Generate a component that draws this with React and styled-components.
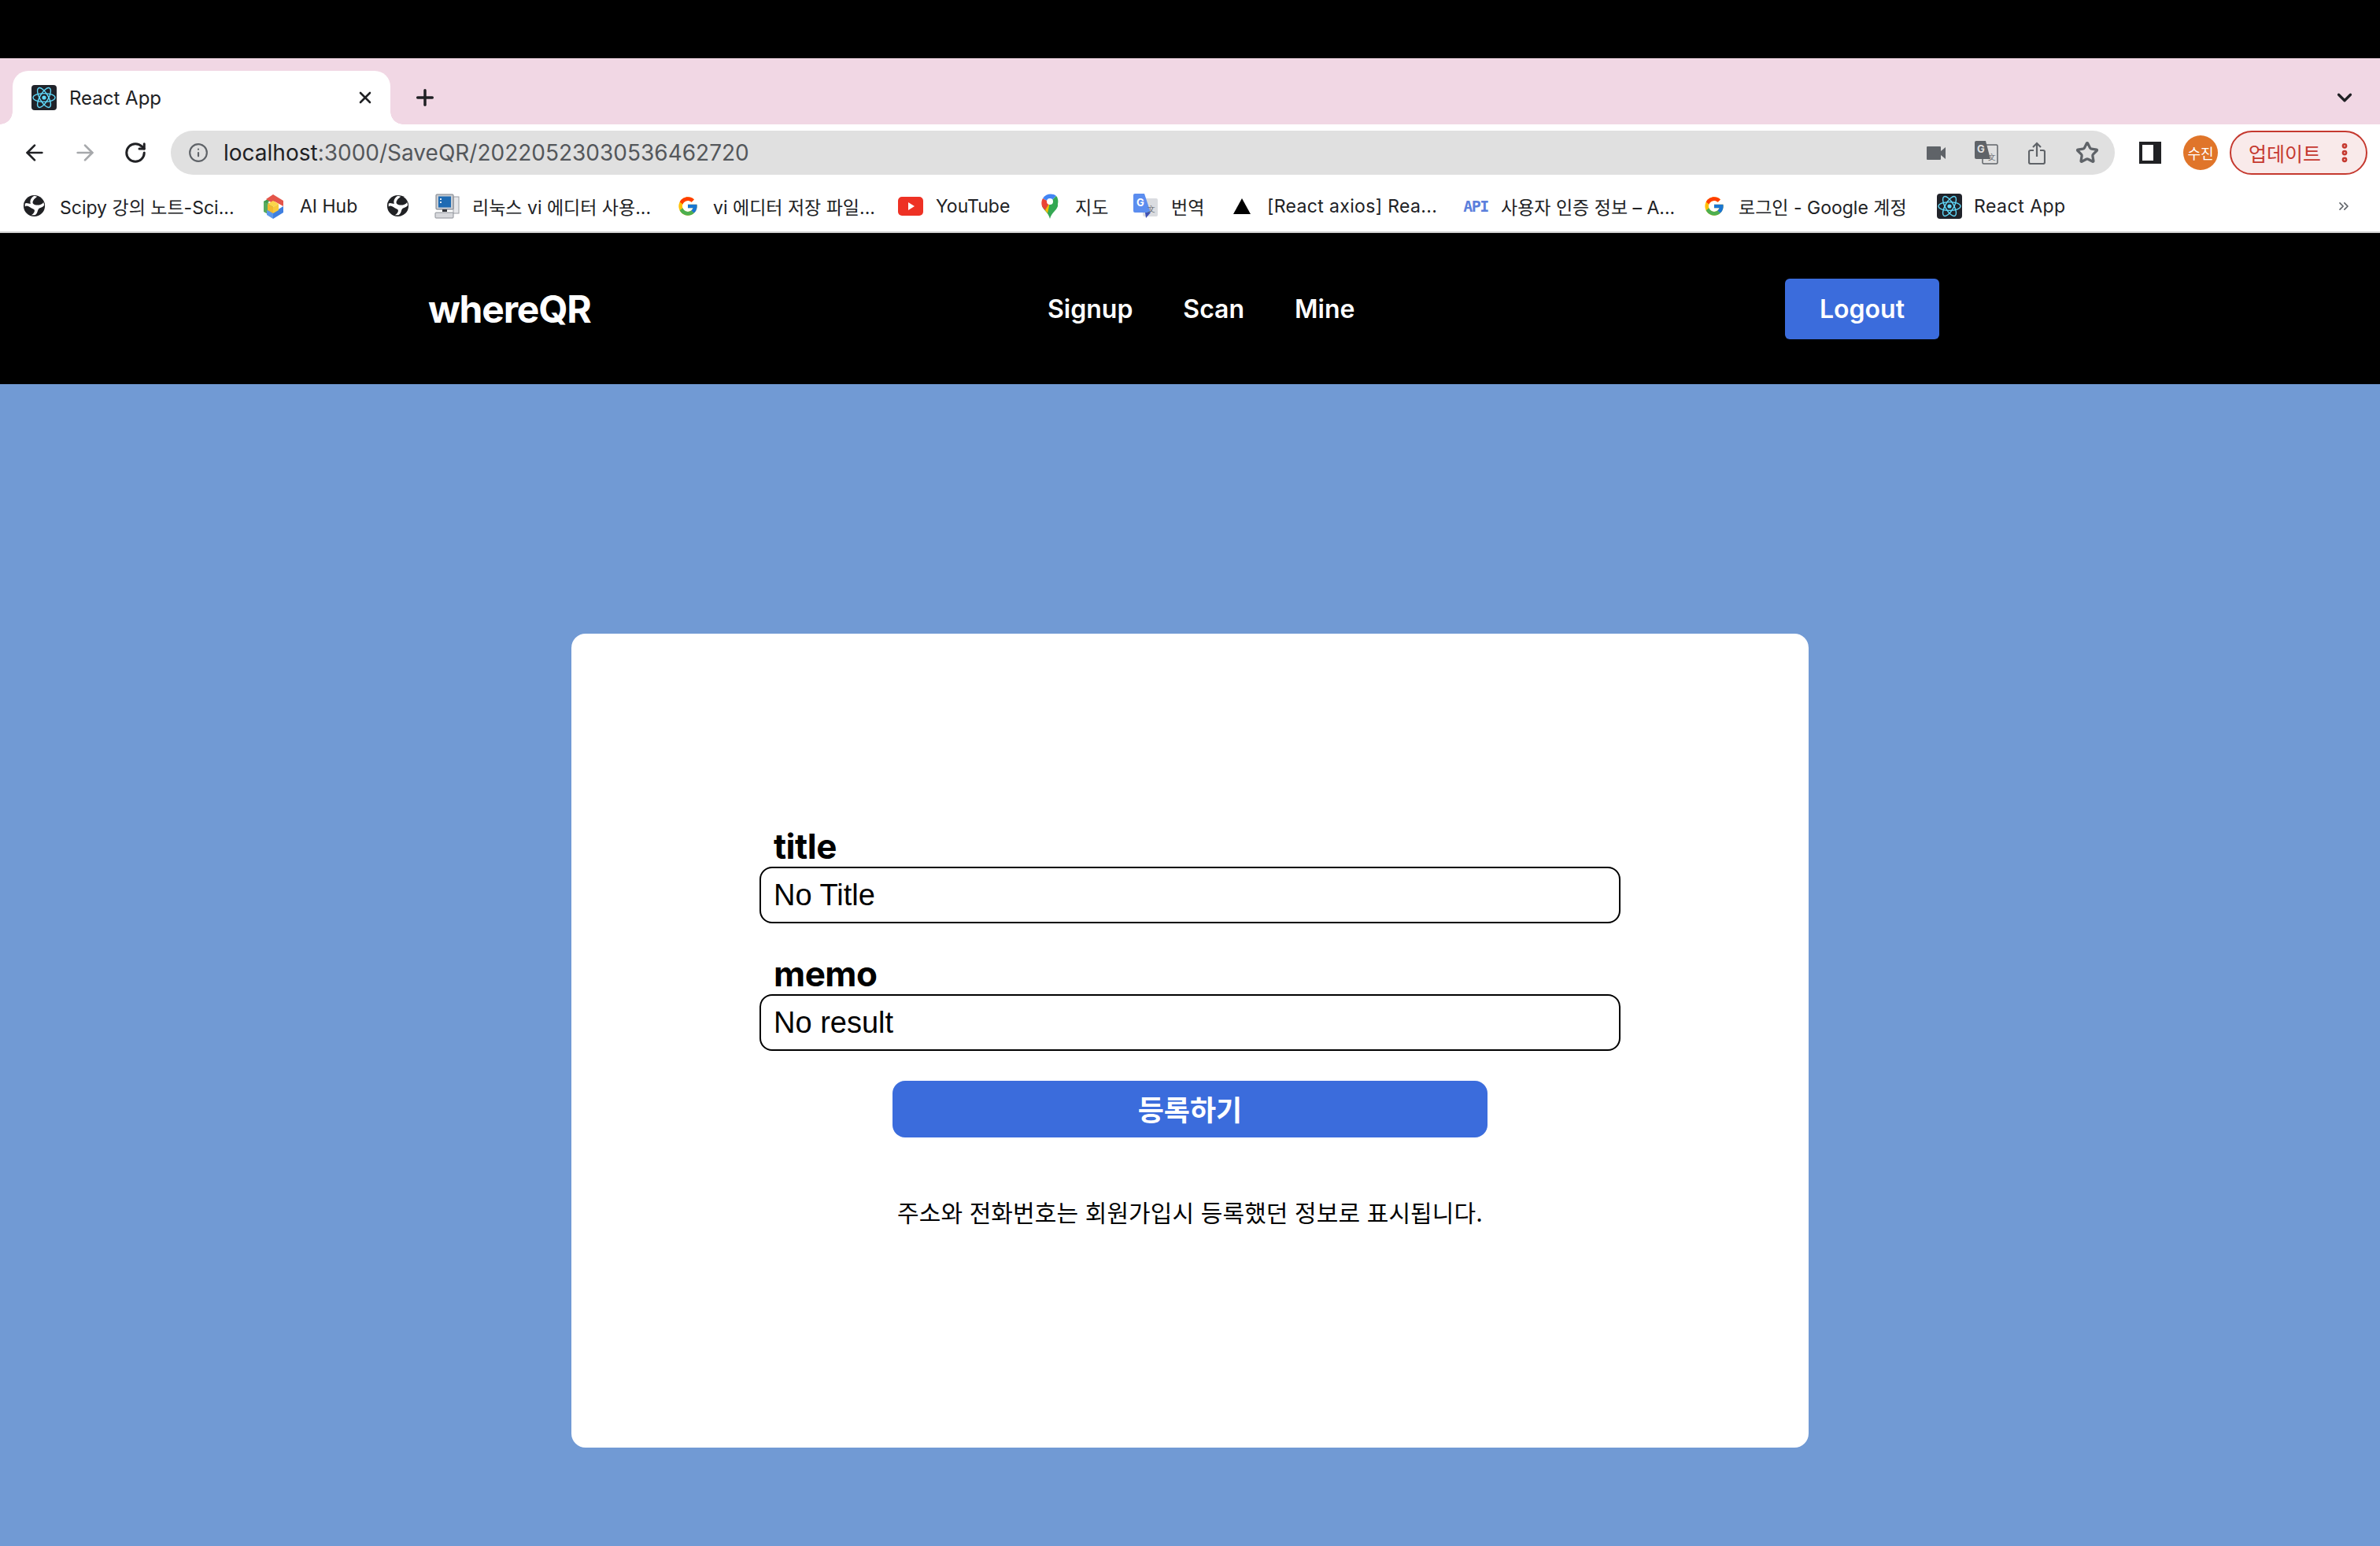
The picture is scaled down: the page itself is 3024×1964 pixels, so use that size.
import React from 'react';
import styled, { createGlobalStyle } from 'styled-components';
import { ArrowLeft, ArrowRight, RotateCw, Info, Star, Plus, X, ChevronDown, ChevronsRight, EllipsisVertical } from 'lucide-react';
import { FcGoogle } from 'react-icons/fc';

const SANS = `Inter, "Noto Sans CJK KR", sans-serif`;
const BLUE = '#719ad4';

const GlobalStyle = createGlobalStyle`
    html, body {
        margin: 0;
        padding: 0;
        width: 3024px;
        height: 1964px;
        overflow: hidden;
        background: ${BLUE};
        font-family: ${SANS};
    }
    * { box-sizing: border-box; }
`;

const Page = styled.div`
    width: 3024px;
    height: 1964px;
    display: flex;
    flex-direction: column;
`;

const MacBar = styled.div`
    height: 74px;
    flex: none;
    background: #000;
`;

const TabStrip = styled.div`
    height: 84px;
    flex: none;
    background: #f1d7e4;
    display: flex;
    align-items: flex-end;
    padding-left: 16px;
    padding-right: 30px;
`;

const Tab = styled.div`
    position: relative;
    width: 480px;
    height: 68px;
    background: #fff;
    border-radius: 20px 20px 0 0;
    display: flex;
    align-items: center;
    padding-left: 24px;
    gap: 16px;
    color: #202124;
    font-size: 24px;

    &::before, &::after {
        content: '';
        position: absolute;
        bottom: 0;
        width: 16px;
        height: 16px;
    }
    &::before {
        left: -16px;
        background: radial-gradient(circle at 0 0, #f1d7e4 15.5px, #fff 16px);
    }
    &::after {
        right: -16px;
        background: radial-gradient(circle at 100% 0, #f1d7e4 15.5px, #fff 16px);
    }
`;

const TabTitle = styled.span`
    flex: 1;
`;

const TabClose = styled.span`
    display: flex;
    margin-right: 20px;
`;

const NewTab = styled.span`
    display: flex;
    height: 68px;
    align-items: center;
    margin-left: 28px;
    color: #202124;
`;

const TabMenu = styled.span`
    display: flex;
    height: 68px;
    align-items: center;
    margin-left: auto;
    color: #202124;
`;

const Toolbar = styled.div`
    height: 74px;
    flex: none;
    background: #fff;
    display: flex;
    padding: 8px 16px 10px 28px;
    align-items: center;
`;

const NavIcon = styled.span`
    width: 32px;
    margin-right: ${props => props.$gap}px;
    display: flex;
    justify-content: center;
    color: ${props => props.$off ? '#a6a8ab' : '#202124'};
`;

const AddressBar = styled.div`
    width: 2470px;
    height: 56px;
    flex: none;
    background: #e0e0e0;
    border-radius: 28px;
    display: flex;
    align-items: center;
    padding-left: 22px;
    padding-right: 3px;
    color: #5f6368;
`;

const UrlText = styled.div`
    flex: 1;
    margin-left: 19px;
    font-size: 28px;
    color: #54575b;
    white-space: nowrap;
`;

const UrlHost = styled.span`
    color: #202124;
`;

const AddressActions = styled.div`
    display: flex;
    align-items: center;
`;

const AddressAction = styled.span`
    width: 64px;
    display: flex;
    justify-content: center;
    align-items: center;
`;

const SidePanelIcon = styled.span`
    width: 28px;
    height: 28px;
    flex: none;
    margin-left: 31px;
    border: solid #202124;
    border-width: 4px 10px 4px 4px;
`;

const Avatar = styled.span`
    width: 44px;
    height: 44px;
    flex: none;
    margin-left: 28px;
    border-radius: 50%;
    background: #e0752a;
    color: #fff;
    font-size: 18px;
    display: flex;
    align-items: center;
    justify-content: center;
`;

const UpdateButton = styled.div`
    width: 175px;
    height: 56px;
    flex: none;
    margin-left: 15px;
    border: 2px solid #c5392f;
    border-radius: 28px;
    background: #f9eaea;
    color: #c5392f;
    font-size: 25px;
    display: flex;
    align-items: center;
    padding-left: 22px;
    gap: 15px;
`;

const BookmarkBar = styled.div`
    height: 64px;
    flex: none;
    background: #fff;
    border-bottom: 2px solid #d0d0d0;
    display: flex;
    align-items: center;
    padding-left: 27px;
    padding-bottom: 3px;
    font-size: 23px;
    color: #202124;
`;

const Bookmark = styled.div`
    width: ${props => props.$width}px;
    flex: none;
    display: flex;
    align-items: center;
    gap: ${props => props.$gap || 14}px;
    letter-spacing: ${props => props.$track || 0}px;
    white-space: nowrap;
    overflow: hidden;
`;

const BookmarkIcon = styled.span`
    width: 32px;
    height: 32px;
    flex: none;
    display: flex;
    align-items: center;
    justify-content: center;
`;

const BookmarkMore = styled.span`
    margin-left: auto;
    margin-right: 36px;
    display: flex;
    color: #5f6368;
`;

const ApiMark = styled.span`
    font-family: "DejaVu Sans Mono", monospace;
    font-weight: 700;
    font-size: 20px;
    color: #5b7fdc;
    letter-spacing: -1.5px;
`;

const SiteNav = styled.nav`
    height: 192px;
    flex: none;
    background: #000;
    display: flex;
    align-items: center;
    padding: 0 560px 0 544px;
`;

const Brand = styled.div`
    width: 787px;
    color: #fff;
    font-size: 48px;
    font-weight: 700;
    letter-spacing: -1.2px;
`;

const NavLinks = styled.div`
    display: flex;
    gap: 64px;
    flex: 1;
`;

const NavLink = styled.a`
    color: #fff;
    font-size: 32px;
    font-weight: 600;
`;

const LogoutButton = styled.button`
    width: 196px;
    height: 77px;
    border: 0;
    border-radius: 6px;
    background: #3b6cdc;
    color: #fff;
    font-family: ${SANS};
    font-size: 32px;
    font-weight: 600;
`;

const Main = styled.main`
    flex: 1;
    background: ${BLUE};
    display: flex;
    justify-content: center;
    padding-top: 317px;
`;

const Card = styled.section`
    width: 1572px;
    height: 1034px;
    background: #fff;
    border-radius: 18px;
    display: flex;
    flex-direction: column;
    align-items: center;
    padding-top: 245px;
`;

const Field = styled.div`
    width: 1094px;
    margin-bottom: ${props => props.$after}px;
`;

const FieldLabel = styled.label`
    display: block;
    height: 51px;
    padding-left: 18px;
    font-size: 44px;
    line-height: 51px;
    font-weight: 700;
    letter-spacing: -0.5px;
    color: #000;
`;

const FieldInput = styled.div`
    height: 72px;
    border: 2px solid #000;
    border-radius: 16px;
    padding-left: 16px;
    display: flex;
    align-items: center;
    font-family: "Liberation Sans", Arial, sans-serif;
    font-size: 38px;
    color: #000;
`;

const SubmitButton = styled.button`
    width: 756px;
    height: 72px;
    flex: none;
    border: 0;
    border-radius: 16px;
    padding: 0 0 3px;
    background: #3b6cdc;
    color: #fff;
    font-family: ${SANS};
    font-size: 36px;
    font-weight: 600;
`;

const Notice = styled.p`
    margin: 72px 0 0;
    font-size: 30px;
    letter-spacing: 0.1px;
    color: #000;
`;

function ReactIcon({ size }) {
    return (
        <svg width={size} height={size} viewBox="0 0 32 32">
            <rect width="32" height="32" rx="4" fill="#20232a" />
            <g fill="none" stroke="#61dafb" strokeWidth="1.4">
                <ellipse cx="16" cy="16" rx="14" ry="5.4" />
                <ellipse cx="16" cy="16" rx="14" ry="5.4" transform="rotate(60 16 16)" />
                <ellipse cx="16" cy="16" rx="14" ry="5.4" transform="rotate(120 16 16)" />
            </g>
            <circle cx="16" cy="16" r="2.6" fill="#61dafb" />
        </svg>
    );
}

// chrome's default favicon: black disc with a white swoosh
function GlobeIcon() {
    return (
        <svg width="29" height="29" viewBox="0 0 32 32">
            <circle cx="16" cy="16" r="15" fill="#202124" />
            <path d="M3 17 C7 14 10 19 14 20 C18 21 17 26 12 29 L17 29 C22 26 20 20 24 19 C27 18 29 17 30 15 L29 11 C27 14 24 15 20 15 C15 15 12 12 15 8 C16 6 18 5 20 3 L16 2 C12 4 9 9 11 13 C8 13 5 11 3 13 Z" fill="#fff" />
        </svg>
    );
}

function HubIcon() {
    return (
        <svg width="30" height="32" viewBox="0 0 30 32">
            <path d="M5 9 L15 15 L15 30 L3 23 L3 10 Z" fill="#57ab5f" />
            <path d="M3 10 L13 4 L15 6 L7 12 Z" fill="#3f9a4c" />
            <path d="M6 7 L15 1 L28 9 L28 16 L17 10 L14 12 Z" fill="#e4554a" />
            <path d="M15 24 L28 16 L28 24 L15 32 Z" fill="#3f7fe0" />
            <path d="M15 24 L15 32 L7 27 L7 21 Z" fill="#5a97ea" />
            <path d="M15 9 L22 13 L15 17 L8 13 Z" fill="#fbd54a" />
            <path d="M8 13 L15 17 L15 25 L8 21 Z" fill="#f3b92f" />
            <path d="M22 13 L22 21 L15 25 L15 17 Z" fill="#f7c93c" />
        </svg>
    );
}

function ComputerIcon() {
    return (
        <svg width="32" height="32" viewBox="0 0 32 32">
            <rect x="24" y="4" width="7" height="21" fill="#e6e7ea" stroke="#9a9da3" />
            <rect x="2" y="1" width="22" height="19" rx="1" fill="#c9ccd1" stroke="#7b7f87" />
            <rect x="5" y="3.500" width="16" height="14" fill="#1f6bb3" />
            <rect x="7" y="6" width="2" height="2" fill="#dfe9f3" />
            <rect x="7" y="10" width="2" height="2" fill="#dfe9f3" />
            <rect x="10" y="20" width="6" height="3" fill="#33363b" />
            <rect x="1" y="24" width="23" height="7" rx="1" fill="#d7d8dc" stroke="#8c9097" />
        </svg>
    );
}

function YoutubeIcon() {
    return (
        <svg width="32" height="24" viewBox="0 0 32 24">
            <rect width="32" height="24" rx="5" fill="#ee3124" />
            <path d="M13 7 L21 12 L13 17 Z" fill="#fff" />
        </svg>
    );
}

function MapsIcon() {
    return (
        <svg width="22" height="32" viewBox="0 0 22 32">
            <path d="M1 16 C3 21 9 24 11 32 C13 24 19 22 21 16 L21 10 L1 10 Z" fill="#34a853" />
            <path d="M1 16 C0 13 0 9 2 6 L11 11 L5 21 C3 19 2 18 1 16 Z" fill="#ea4335" />
            <path d="M2 6 C6 0 14 -1 19 3 L11 11 Z" fill="#4285f4" />
            <path d="M5 21 L11 11 L8 25 C7 24 6 22 5 21 Z" fill="#fbbc04" />
            <path d="M19 3 C21 5 22 9 21 13 L11 11 Z" fill="#34a853" />
            <circle cx="11" cy="10" r="4" fill="#fff" />
        </svg>
    );
}

function TranslateIcon() {
    return (
        <svg width="32" height="32" viewBox="0 0 32 32">
            <rect x="12" y="6" width="19" height="23" rx="2" fill="#dadce0" />
            <path d="M2 0 H14 L22 24 H2 a2 2 0 0 1 -2 -2 V2 a2 2 0 0 1 2 -2 Z" fill="#5b8def" />
            <path d="M15 24 L16 31 L22 24 Z" fill="#3e50b4" />
            <text x="4" y="16" fontSize="13" fontWeight="700" fontFamily="Inter" fill="#fff">G</text>
            <text x="18" y="23" fontSize="10" fontFamily="Inter" fill="#5f6368">文</text>
        </svg>
    );
}

function OmniboxTranslateIcon() {
    return (
        <svg width="30" height="30" viewBox="0 0 30 30">
            <rect x="10" y="5" width="19" height="24" rx="1.5" fill="none" stroke="#5f6368" strokeWidth="1.500" />
            <path d="M2 0 H14 L20 23 H2 a2 2 0 0 1 -2 -2 V2 a2 2 0 0 1 2 -2 Z" fill="#5f6368" />
            <text x="3" y="15" fontSize="13" fontWeight="700" fontFamily="Inter" fill="#e0e0e0">G</text>
            <text x="17" y="24" fontSize="10" fontFamily="Inter" fill="#5f6368">文</text>
        </svg>
    );
}

function VideoIcon() {
    return (
        <svg width="24" height="17" viewBox="0 0 24 17">
            <rect width="18" height="17" rx="1" fill="#5f6368" />
            <path d="M18 6 L24 1 V16 L18 11 Z" fill="#5f6368" />
        </svg>
    );
}

function ShareIcon() {
    return (
        <svg width="22" height="29" viewBox="0 0 22 29" fill="none" stroke="#5f6368" strokeWidth="2.2">
            <path d="M11 19 V2 M6 7 L11 2 L16 7" />
            <path d="M7 11 H3 a2 2 0 0 0 -2 2 V26 a2 2 0 0 0 2 2 H19 a2 2 0 0 0 2 -2 V13 a2 2 0 0 0 -2 -2 H15" />
        </svg>
    );
}

function TriangleIcon() {
    return (
        <svg width="22" height="20" viewBox="0 0 22 20">
            <path d="M11 0 L22 20 H0 Z" fill="#000" />
        </svg>
    );
}

function App() {
    return (
        <Page>
            <GlobalStyle />
            <MacBar />
            <TabStrip>
                <Tab>
                    <ReactIcon size={32} />
                    <TabTitle>React App</TabTitle>
                    <TabClose><X size={24} strokeWidth={2.6} /></TabClose>
                </Tab>
                <NewTab><Plus size={32} strokeWidth={2.6} /></NewTab>
                <TabMenu><ChevronDown size={30} strokeWidth={2.6} /></TabMenu>
            </TabStrip>
            <Toolbar>
                <NavIcon $gap={32}><ArrowLeft size={34} strokeWidth={2} /></NavIcon>
                <NavIcon $gap={32} $off><ArrowRight size={34} strokeWidth={2} /></NavIcon>
                <NavIcon $gap={29}><RotateCw size={30} strokeWidth={2.4} /></NavIcon>
                <AddressBar>
                    <Info size={26} strokeWidth={2} />
                    <UrlText><UrlHost>localhost</UrlHost>:3000/SaveQR/20220523030536462720</UrlText>
                    <AddressActions>
                        <AddressAction><VideoIcon /></AddressAction>
                        <AddressAction><OmniboxTranslateIcon /></AddressAction>
                        <AddressAction><ShareIcon /></AddressAction>
                        <AddressAction><Star size={30} strokeWidth={2.6} /></AddressAction>
                    </AddressActions>
                </AddressBar>
                <SidePanelIcon />
                <Avatar>수진</Avatar>
                <UpdateButton>
                    업데이트
                    <EllipsisVertical size={30} strokeWidth={3.4} />
                </UpdateButton>
            </Toolbar>
            <BookmarkBar>
                <Bookmark $width={304} $gap={17}><BookmarkIcon><GlobeIcon /></BookmarkIcon>Scipy 강의 노트-Sci...</Bookmark>
                <Bookmark $width={158} $gap={18}><BookmarkIcon><HubIcon /></BookmarkIcon>AI Hub</Bookmark>
                <Bookmark $width={63}><BookmarkIcon><GlobeIcon /></BookmarkIcon></Bookmark>
                <Bookmark $width={306} $gap={16}><BookmarkIcon><ComputerIcon /></BookmarkIcon>리눅스 vi 에디터 사용...</Bookmark>
                <Bookmark $width={283} $gap={16}><BookmarkIcon><FcGoogle size={28} /></BookmarkIcon>vi 에디터 저장 파일...</Bookmark>
                <Bookmark $width={177} $gap={16}><BookmarkIcon><YoutubeIcon /></BookmarkIcon>YouTube</Bookmark>
                <Bookmark $width={122} $gap={16}><BookmarkIcon><MapsIcon /></BookmarkIcon>지도</Bookmark>
                <Bookmark $width={122} $gap={16}><BookmarkIcon><TranslateIcon /></BookmarkIcon>번역</Bookmark>
                <Bookmark $width={297} $gap={16} $track={0.35}><BookmarkIcon><TriangleIcon /></BookmarkIcon>[React axios] Rea...</Bookmark>
                <Bookmark $width={303} $gap={16}><BookmarkIcon><ApiMark>API</ApiMark></BookmarkIcon>사용자 인증 정보 – A...</Bookmark>
                <Bookmark $width={299} $gap={15}><BookmarkIcon><FcGoogle size={28} /></BookmarkIcon>로그인 - Google 계정</Bookmark>
                <Bookmark $width={194} $gap={15} $track={0.5}><BookmarkIcon><ReactIcon size={32} /></BookmarkIcon>React App</Bookmark>
                <BookmarkMore><ChevronsRight size={20} strokeWidth={2} /></BookmarkMore>
            </BookmarkBar>
            <SiteNav>
                <Brand>whereQR</Brand>
                <NavLinks>
                    <NavLink>Signup</NavLink>
                    <NavLink>Scan</NavLink>
                    <NavLink>Mine</NavLink>
                </NavLinks>
                <LogoutButton>Logout</LogoutButton>
            </SiteNav>
            <Main>
                <Card>
                    <Field $after={39}>
                        <FieldLabel>title</FieldLabel>
                        <FieldInput>No Title</FieldInput>
                    </Field>
                    <Field $after={38}>
                        <FieldLabel>memo</FieldLabel>
                        <FieldInput>No result</FieldInput>
                    </Field>
                    <SubmitButton>등록하기</SubmitButton>
                    <Notice>주소와 전화번호는 회원가입시 등록했던 정보로 표시됩니다.</Notice>
                </Card>
            </Main>
        </Page>
    );
}

export default App;
